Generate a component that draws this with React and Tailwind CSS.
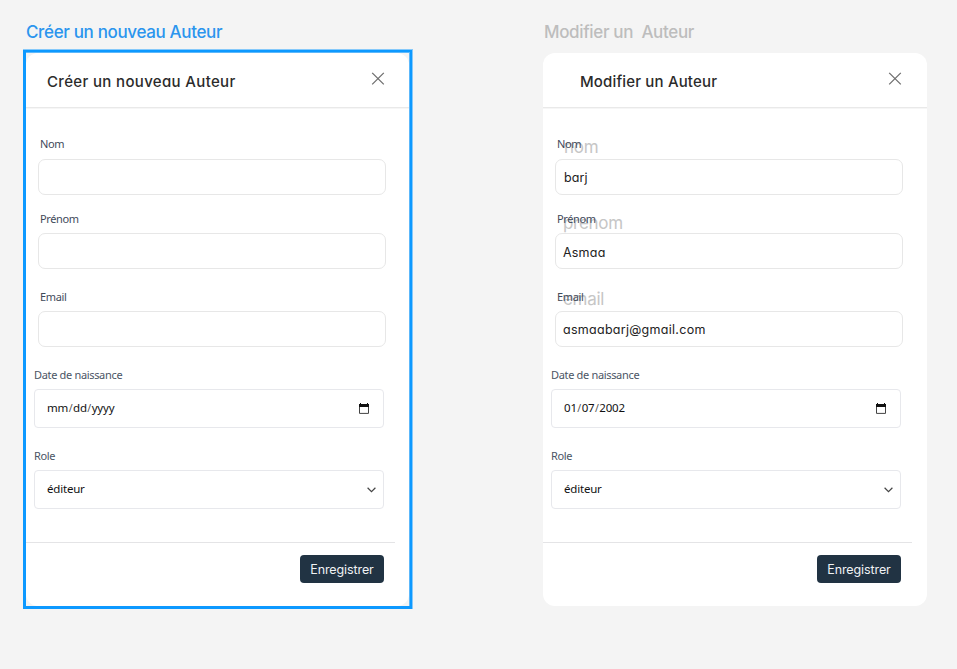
const GEOMETRIC = "font-['Inter',sans-serif] [font-feature-settings:'cv11']";

function CloseIcon() {
  return (
    <svg width="14" height="14" viewBox="0 0 14 14" fill="none" stroke="#6f6f6f" strokeWidth="1.3">
      <path d="M1.2.9 12.8 12.4M12.8.9 1.2 12.4" />
    </svg>
  );
}

function CalendarIcon() {
  return (
    <svg width="10" height="11" viewBox="0 0 10 11" fill="none">
      <path d="M0 1h1V0h1v1h6V0h1v1h1v3H0V1Z" fill="#111" />
      <path d="M.5 4v6.4h9V4" stroke="#444" />
    </svg>
  );
}

function ChevronIcon() {
  return (
    <svg width="9" height="6" viewBox="0 0 9 6" fill="none" stroke="#444" strokeWidth="1.2">
      <path d="M.6.8 4.5 4.6 8.4.8" />
    </svg>
  );
}

function TextField({ label, value, ghost, labelGap, valueClass, ghostClass }) {
  return (
    <div className="relative ml-3 w-[348px]">
      {ghost && (
        <span className={`absolute text-[17px] leading-5 tracking-[-0.3px] text-[#c6c6c6] font-['Inter',sans-serif] ${ghostClass}`}>
          {ghost}
        </span>
      )}
      <div className={`relative ml-[2px] h-4 text-[11px] leading-4 tracking-[-0.36px] text-[#3f4a5a] ${labelGap}`}>{label}</div>
      <div className={`relative flex h-9 items-center rounded-[7px] border border-[#e7e7e7] bg-white text-[12.5px] text-[#222] ${GEOMETRIC} ${valueClass || ""}`}>
        {value}
      </div>
    </div>
  );
}

function BoxField({ label, children, icon, iconClass }) {
  return (
    <div className="ml-2 w-[350px]">
      <div className="mb-[6px] h-4 text-[11px] leading-4 tracking-[-0.33px] text-[#4b5565]">{label}</div>
      <div className="flex h-[39px] items-center justify-between rounded-[4px] border border-[#e7e8ec] bg-white pl-3 text-[11.5px] tracking-[-0.2px] text-[#111]">
        <span className="-mt-px">{children}</span>
        <span className={iconClass}>{icon}</span>
      </div>
    </div>
  );
}

function DateText({ parts }) {
  return parts.map((part, i) => (
    <span key={i}>
      {i > 0 && <span className="px-[0.6px] text-[10.5px] text-[#555]">/</span>}
      {part}
    </span>
  ));
}

function SelectionFrame() {
  return (
    <div className="pointer-events-none absolute -bottom-[3px] -left-[3px] -right-[4px] -top-[4px] border-r border-t border-[#86c9fa]">
      <div className="size-full border-b-[3px] border-l-[3px] border-r-2 border-t-2 border-[#0d99ff]">
        <div className="size-full border-r border-t border-[#5cb8fb]" />
      </div>
    </div>
  );
}

function AuthorCard({ title, titleClass, widthClass, selected, values, date }) {
  const v = values || {};
  return (
    <section className={`relative h-[553px] rounded-[12px] bg-white font-['Noto_Sans',sans-serif] ${widthClass}`}>
      <header className="flex h-[55px] justify-between border-b border-[#e9e9e9] shadow-[0_1px_0_#f6f6f6]">
        <h2 className={`mt-[17px] text-[15px] font-medium leading-6 text-[#2b2b2b] ${GEOMETRIC} ${titleClass}`}>{title}</h2>
        <button className={`mt-[19px] h-[14px] ${selected ? "mr-6" : "mr-[25px]"}`}>
          <CloseIcon />
        </button>
      </header>
      <div className="flex flex-col pt-7">
        <TextField label="Nom" labelGap="mb-[7px]" value={v.nom} valueClass="pl-2 pt-[2px] tracking-[0.1px]" ghost={v.nom && "nom"} ghostClass="left-[9px] top-[1px]" />
        <div className="h-4" />
        <TextField label="Prénom" labelGap="mb-[6px]" value={v.prenom} valueClass="pl-[7px] pt-[5px] tracking-[0.2px]" ghost={v.nom && "prenom"} ghostClass="left-[8px] top-[2px]" />
        <div className="h-5" />
        <TextField label="Email" labelGap="mb-[6px]" value={v.email} valueClass="pl-[7px] pt-[2px] tracking-[0.28px]" ghost={v.nom && "email"} ghostClass="left-[8px] top-0" />
        <div className="h-5" />
        <BoxField label="Date de naissance" icon={<CalendarIcon />} iconClass="mr-[14px]">
          <DateText parts={date} />
        </BoxField>
        <div className="h-5" />
        <BoxField label="Role" icon={<ChevronIcon />} iconClass="mr-[7px]">
          éditeur
        </BoxField>
      </div>
      <footer className="mt-[33px] flex w-[369px] justify-end border-t border-[#e4e4e6] pr-[11px] pt-3">
        <button className={`h-7 w-[84px] rounded-[4px] bg-[#213343] pt-[2px] text-[12.5px] tracking-[-0.1px] text-[#f0f2f4] ${GEOMETRIC}`}>Enregistrer</button>
      </footer>
      {selected && <SelectionFrame />}
    </section>
  );
}

export default function App() {
  return (
    <main className="flex h-[669px] w-[957px] overflow-hidden bg-[#f4f4f4] pl-[26px] pt-[22px]">
      <div className="w-[517px]">
        <div className="mb-[11px] h-5 whitespace-pre text-[17px] font-[450] leading-5 tracking-[-0.35px] text-[#2b95ee] font-['Inter',sans-serif]">Créer un nouveau Auteur</div>
        <AuthorCard
          selected
          title="Créer un nouveau Auteur"
          titleClass="ml-[21px] tracking-[0.34px]"
          widthClass="w-[383px]"
          date={["mm", "dd", "yyyy"]}
        />
      </div>
      <div>
        <div className="mb-[11px] ml-px h-5 whitespace-pre text-[17px] font-[450] leading-5 tracking-[-0.35px] text-[#bdbdbd] font-['Inter',sans-serif]">Modifier un  Auteur</div>
        <AuthorCard
          title="Modifier un Auteur"
          titleClass="ml-[37px] tracking-[0.16px]"
          widthClass="w-[384px]"
          date={["01", "07", "2002"]}
          values={{ nom: "barj", prenom: "Asmaa", email: "asmaabarj@gmail.com" }}
        />
      </div>
    </main>
  );
}
